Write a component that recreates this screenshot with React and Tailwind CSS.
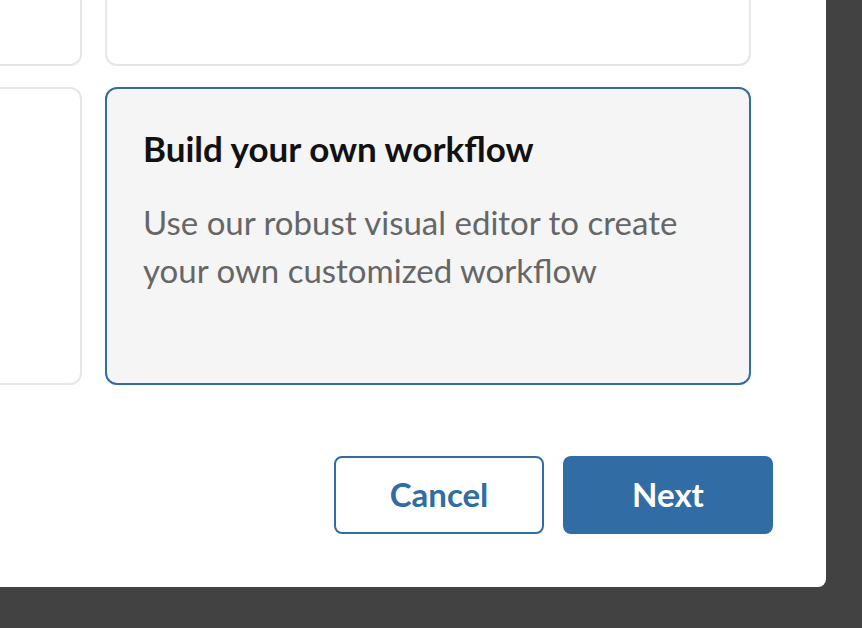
export default function App() {
  return (
    <div className="w-[862px] h-[628px] bg-[#424242] overflow-hidden" style={{ fontFamily: "Lato, 'Noto Sans', sans-serif" }}>
      <div className="w-[826px] h-[587px] bg-white rounded-br-lg overflow-hidden flex flex-col">
        <div className="-ml-[564px] -mt-[233px] grid grid-cols-[646px_646px] gap-x-[23px] gap-y-[21px]">
          <div className="h-[299px] rounded-xl border-2 border-[#e6e6e6]" />
          <div className="h-[299px] rounded-xl border-2 border-[#e6e6e6]" />
          <div className="h-[298px] rounded-xl border-2 border-[#e6e6e6]" />
          <button className="h-[298px] rounded-xl border-2 border-[#316ca5] bg-[#f5f5f5] text-left flex flex-col justify-start pl-[36px] pr-8 pt-[39px]">
            <h2 className="text-[35px] leading-[40px] font-bold text-[#111]">Build your own workflow</h2>
            <p className="mt-[30px] text-[33px] leading-[48px] text-[#666]">
              Use our robust visual editor to create your own customized workflow
            </p>
          </button>
        </div>
        <div className="flex justify-end gap-[19px] pr-[53px] mt-[71px]">
          <button className="w-[210px] h-[78px] rounded-lg border-2 border-[#316ca5] text-[#316ca5] text-[33px] font-bold">
            Cancel
          </button>
          <button className="w-[210px] h-[78px] rounded-lg bg-[#316ca5] text-white text-[33px] font-bold">
            Next
          </button>
        </div>
      </div>
    </div>
  );
}
